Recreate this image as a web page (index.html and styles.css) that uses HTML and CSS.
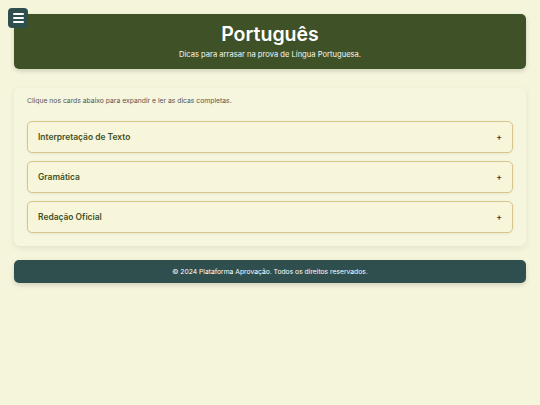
FILE: index.html
```html
<!DOCTYPE html>
<html lang="pt-BR">
<head>
    <meta charset="UTF-8">
    <meta name="viewport" content="width=device-width, initial-scale=1.0">
    <title>Português - Plataforma Aprovação</title>
    <link rel="stylesheet" href="styles.css">
</head>
<body>
    <button class="menu-btn" title="Menu">
        <span></span><span></span><span></span>
    </button>

    <header class="page-header">
        <h1>Português</h1>
        <p>Dicas para arrasar na prova de Língua Portuguesa.</p>
    </header>

    <main class="content-card">
        <p class="intro">Clique nos cards abaixo para expandir e ler as dicas completas.</p>

        <div class="accordion">
            <div class="accordion-item">
                <span class="accordion-title">Interpretação de Texto</span>
                <span class="accordion-icon">+</span>
            </div>
            <div class="accordion-item">
                <span class="accordion-title">Gramática</span>
                <span class="accordion-icon">+</span>
            </div>
            <div class="accordion-item">
                <span class="accordion-title">Redação Oficial</span>
                <span class="accordion-icon">+</span>
            </div>
        </div>
    </main>

    <footer class="page-footer">
        © 2024 Plataforma Aprovação. Todos os direitos reservados.
    </footer>
</body>
</html>
```

FILE: styles.css
```css
:root {
    --bg-beige: #f5f5dc;
    --olive: #3f5227;
    --slate: #2f4f4f;
    --tan: #d9c48a;
    --text-gray: #555555;
}

body {
    background: var(--bg-beige);
    color: #333;
    font-family: 'Inter', 'Liberation Sans', sans-serif;
    margin: 0;
    padding: 14px 14px;
}

/* Menu button */
.menu-btn {
    position: absolute;
    top: 8px;
    left: 8px;
    width: 20px;
    height: 20px;
    background: var(--slate);
    border: none;
    border-radius: 4px;
    padding: 0;
    display: flex;
    flex-direction: column;
    justify-content: center;
    align-items: center;
    gap: 2px;
    cursor: pointer;
    z-index: 10;
}

.menu-btn span {
    display: block;
    width: 11px;
    height: 2px;
    background: #fff;
    border-radius: 1px;
}

/* Header */
.page-header {
    background: var(--olive);
    color: #fff;
    border-radius: 5px;
    padding: 8px 16px 9px;
    text-align: center;
    box-shadow: 0 2px 5px rgba(0, 0, 0, 0.15);
    margin-bottom: 19px;
}

.page-header h1 {
    margin: 0;
    font-size: 19.5px;
    font-weight: 600;
    line-height: 24px;
}

.page-header p {
    margin: 4px 0 0;
    font-size: 7.6px;
    line-height: 10px;
    opacity: 0.95;
}

/* Main card */
.content-card {
    display: block;
    background: #f6f6de;
    border-radius: 6px;
    padding: 8px 13px 13px;
    box-shadow: 0 2px 6px rgba(0, 0, 0, 0.08);
    margin-bottom: 14px;
}

.intro {
    margin: 0 0 15px;
    font-size: 6.8px;
    line-height: 10px;
    color: var(--text-gray);
}

.accordion {
    display: flex;
    flex-direction: column;
    gap: 8px;
}

.accordion-item {
    display: flex;
    justify-content: space-between;
    align-items: center;
    height: 32px;
    box-sizing: border-box;
    padding: 0 10px;
    border: 1px solid var(--tan);
    border-radius: 5px;
    background: #f7f5da;
    box-shadow: 0 1px 3px rgba(0, 0, 0, 0.06);
    cursor: pointer;
}

.accordion-title {
    font-size: 8.45px;
    font-weight: 600;
    color: var(--olive);
}

.accordion-icon {
    font-size: 8.5px;
    font-weight: 600;
    color: #333;
}

/* Footer */
.page-footer {
    background: var(--slate);
    color: #fff;
    text-align: center;
    font-size: 6.75px;
    line-height: 23px;
    border-radius: 5px;
    box-shadow: 0 2px 5px rgba(0, 0, 0, 0.15);
}
```
